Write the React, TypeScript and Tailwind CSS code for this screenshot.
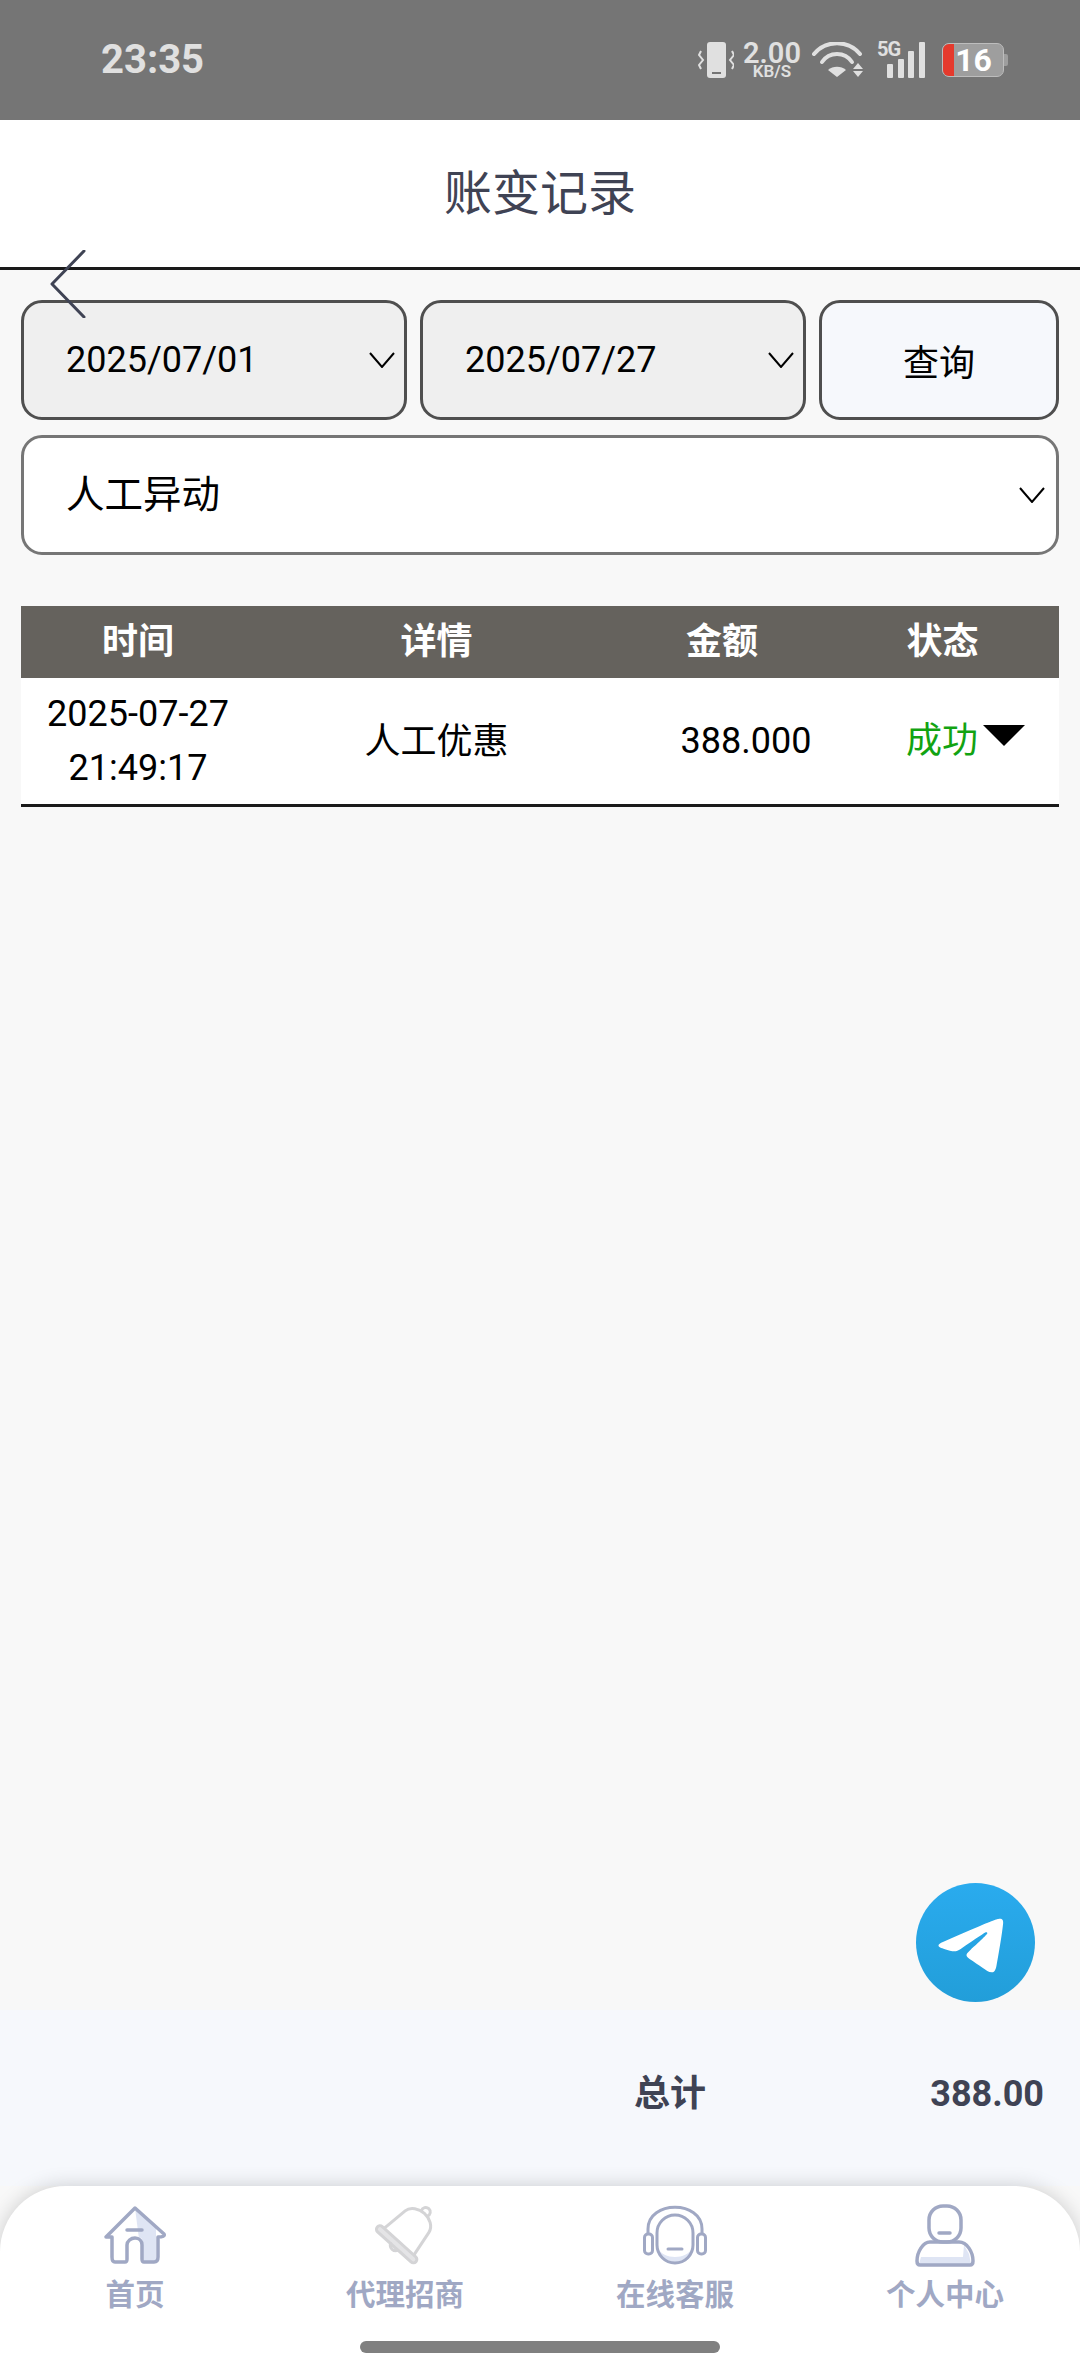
import { ReactNode } from "react";

function Chevron() {
  return (
    <svg width="26" height="16" viewBox="0 0 26 16" fill="none" stroke="#000" strokeWidth="2">
      <path d="M1 1 L13 15 L25 1" />
    </svg>
  );
}

function StatusIcons() {
  return (
    <div className="flex items-center h-[40px] text-[#e0e0e0]">
      <svg width="36" height="36" viewBox="0 0 36 36" fill="none" className="mr-[8px]">
        <rect x="9" y="0" width="19" height="36" rx="3" fill="#e0e0e0" />
        <rect x="14" y="30" width="9" height="2" fill="#757575" />
        <path d="M3 9 L1 13 L5 18 L1 23 L3 27 M34 9 L36 13 L32 18 L36 23 L34 27" stroke="#e0e0e0" strokeWidth="2" />
      </svg>
      <div className="flex flex-col items-center w-[60px] mr-[10px] font-semibold">
        <span className="text-[29px] leading-[22px]">2.00</span>
        <span className="text-[17px] leading-[15px]">KB/S</span>
      </div>
      <svg width="52" height="36" viewBox="0 0 52 36" fill="none" className="mr-[13px]">
        <path d="M2 12 A30 30 0 0 1 48 12" stroke="#e0e0e0" strokeWidth="4" strokeLinecap="round" />
        <path d="M10 20 A18 18 0 0 1 40 20" stroke="#e0e0e0" strokeWidth="4" strokeLinecap="round" />
        <path d="M16 28 L25 35 L34 28 A14 14 0 0 0 16 28 Z" fill="#e0e0e0" />
        <path d="M46 21 L51 27 H41 Z M41 29 H51 L46 35 Z" fill="#e0e0e0" />
      </svg>
      <div className="relative w-[48px] h-[36px] mr-[17px]">
        <span className="absolute left-0 top-0 text-[20px] leading-[14px] font-bold tracking-[-1px]">5G</span>
        <svg width="48" height="36" viewBox="0 0 48 36" fill="#e0e0e0">
          <rect x="10" y="22" width="6" height="14" rx="1" />
          <rect x="21" y="17" width="6" height="19" rx="1" />
          <rect x="31" y="9" width="6" height="27" rx="1" />
          <rect x="42" y="0" width="6" height="36" rx="1" />
        </svg>
      </div>
      <div className="flex items-center">
        <div className="relative w-[62px] h-[34px] rounded-[7px] bg-[#9e9e9e] border border-[#bdbdbd] flex items-center justify-center pl-[1px]">
          <div className="absolute left-0 top-0 bottom-0 w-[11px] rounded-l-[6px] bg-[#e53a2d]" />
          <span className="relative text-[32px] font-bold leading-[32px] text-white">16</span>
        </div>
        <div className="w-[4px] h-[12px] bg-[#9e9e9e] rounded-r-[2px]" />
      </div>
    </div>
  );
}

function DateField({ value }: { value: string }) {
  return (
    <div className="w-[386px] h-[120px] shrink-0 rounded-[21px] border-[3px] border-[#4f4f4f] bg-[#efefef] flex items-center justify-between pl-[42px] pr-[9px]">
      <span className="text-[36px] leading-none text-black">{value}</span>
      <Chevron />
    </div>
  );
}

function HomeIcon() {
  return (
    <svg width="64" height="60" viewBox="0 0 64 60" fill="none" stroke="#a0a8c4" strokeWidth="3.500" strokeLinejoin="round" strokeLinecap="round">
      <path d="M32 3 L53 23 V57 H39 V36 C39 30 36 34 36 34 Z" fill="#dfe5f4" stroke="none" />
      <path d="M9 32 H3 L32 3 L61 29 C62 31 60 32 55 32 V52 C55 55 54 57 51 57 H41 C39 57 39 56 39 54 V40 C39 36 36 33 32 33 C28 33 24 36 24 40 V54 C24 56 24 57 22 57 H12 C10 57 9 55 9 52 Z" />
      <path d="M24 25 H39" />
    </svg>
  );
}

function BellIcon() {
  return (
    <svg width="62" height="64" viewBox="0 0 62 64" fill="none" stroke="#d4d4d6" strokeWidth="3" strokeLinejoin="round" strokeLinecap="round">
      <g transform="rotate(42 31 32)">
        <path d="M27 3 A4.500 4.500 0 1 1 35 3" />
        <path d="M11 41 L15 14 C16 7 24 3 31 3 C38 3 46 7 47 14 L51 41" />
        <rect x="5" y="41" width="52" height="7" rx="3.500" fill="#e4e4e6" />
        <path d="M26 48 A5.500 5.500 0 0 0 36 48" />
      </g>
    </svg>
  );
}

function HeadsetIcon() {
  return (
    <svg width="64" height="60" viewBox="0 0 64 60" fill="none" stroke="#a0a8c4" strokeWidth="3">
      <path d="M15 43 C20 55 44 55 49 43 C47 58 40 58 32 58 C24 58 17 56 15 43 Z" fill="#dfe5f4" stroke="none" />
      <rect x="14" y="10" width="36" height="48" rx="18" />
      <path d="M5 29 V24 C5 -5 59 -5 59 24 V29" />
      <rect x="1.500" y="29" width="8" height="20" rx="3.500" />
      <rect x="54.500" y="29" width="8" height="20" rx="3.500" />
      <path d="M25 44 H39" strokeLinecap="round" />
    </svg>
  );
}

function PersonIcon() {
  return (
    <svg width="60" height="63" viewBox="0 0 60 63" fill="none" stroke="#a0a8c4" strokeWidth="3.500" strokeLinecap="round" strokeLinejoin="round">
      <path d="M6 53 H48 L49 41 L54 50 L56 60 H4 Z" fill="#dfe5f4" stroke="none" />
      <rect x="14" y="2" width="32" height="36" rx="14" fill="#fff" />
      <path d="M15 38 H44 C52 38 58 48 58 57 C58 60 57 61 55 61 H5 C3 61 2 60 2 57 C2 48 8 38 15 38 Z" />
      <path d="M24 29 H35" />
    </svg>
  );
}

function NavItem({ icon, label }: { icon: ReactNode; label: string }) {
  return (
    <div className="flex flex-col items-center">
      <div className="h-[64px] flex items-center justify-center">{icon}</div>
      <span className="mt-[10px] text-[29.500px] leading-[36px] font-bold text-[#a0a8c4]">{label}</span>
    </div>
  );
}

export default function App() {
  return (
    <div className="relative flex flex-col h-[2374px] w-full overflow-hidden bg-[#f8f8f8] font-['Roboto','Noto_Sans_CJK_SC',sans-serif]">
      <div className="h-[120px] shrink-0 bg-[#757575] flex items-center justify-between pl-[101px] pr-[72px]">
        <span className="text-[40px] font-bold text-[#e0e0e0] leading-none">23:35</span>
        <StatusIcons />
      </div>

      <header className="h-[150px] shrink-0 bg-white border-b-[3px] border-[#1a1a1a] flex items-center justify-center">
        <h1 className="text-[48px] leading-none font-normal text-[#3f4354]">账变记录</h1>
      </header>

      {/* back arrow hangs over the header line */}
      <svg width="36" height="68" viewBox="0 0 36 68" fill="none" stroke="#3f4354" strokeWidth="3" strokeLinecap="round" strokeLinejoin="round" className="absolute left-[50px] top-[250px]">
        <path d="M34 1 L2 34 L34 67" />
      </svg>

      <main className="flex-1 px-[21px] pt-[30px]">
        <div className="flex gap-[13px]">
          <DateField value="2025/07/01" />
          <DateField value="2025/07/27" />
          <button className="flex-1 h-[120px] rounded-[21px] border-[3px] border-[#4f4f4f] bg-[#f6f8fc] text-[36px] text-black pt-[7px]">查询</button>
        </div>
        <div className="mt-[15px] h-[120px] rounded-[21px] border-[3px] border-[#767676] bg-white flex items-center justify-between pl-[42px] pr-[11px]">
          <span className="text-[38.500px] leading-none text-black">人工异动</span>
          <Chevron />
        </div>

        <div className="mt-[51px] text-[36px] text-black">
          <div className="grid grid-cols-[234px_363px_208px_1fr] h-[72px] items-center bg-[#65625d] text-white font-bold text-center">
            <span>时间</span>
            <span>详情</span>
            <span>金额</span>
            <span>状态</span>
          </div>
          <div className="grid grid-cols-[234px_363px_208px_1fr] h-[129px] items-center bg-white border-b-[3px] border-[#1a1a1a] text-center">
            <span className="leading-[54px]">
              2025-07-27
              <br />
              21:49:17
            </span>
            <span className="pt-[2px]">人工优惠</span>
            <span className="pl-[48px]">388.000</span>
            <div className="flex items-center pl-[80px]">
              <span className="text-[#12a312]">成功</span>
              <svg width="42" height="21" viewBox="0 0 42 21" fill="#000" className="ml-[5px] mb-[12px]">
                <path d="M0 0 H42 L21 21 Z" />
              </svg>
            </div>
          </div>
        </div>
      </main>

      <a className="absolute left-[916px] top-[1883px]">
        <svg width="119" height="119" viewBox="0 0 240 240">
          <defs>
            <linearGradient id="tg" x1="0" y1="0" x2="0" y2="1">
              <stop offset="0" stopColor="#2AABEE" />
              <stop offset="1" stopColor="#229ED9" />
            </linearGradient>
          </defs>
          <circle cx="120" cy="120" r="120" fill="url(#tg)" />
          <path fill="#fff" d="M54.300 118.800c35-15.200 58.300-25.300 70-30.200 33.300-13.900 40.300-16.300 44.800-16.400 1 0 3.200.2 4.700 1.400 1.200 1 1.500 2.300 1.700 3.300s.4 3.100.2 4.700c-1.800 19-9.600 65.100-13.600 86.300-1.700 9-5 12-8.200 12.300-7 .6-12.300-4.600-19-9-10.600-6.900-16.500-11.200-26.800-18-11.900-7.800-4.200-12.100 2.600-19.100 1.800-1.800 32.500-29.800 33.100-32.300.1-.3.1-1.500-.6-2.100-.7-.6-1.700-.4-2.500-.2-1.100.2-17.900 11.400-50.600 33.500-4.800 3.300-9.100 4.900-13 4.800-4.300-.1-12.500-2.400-18.700-4.400-7.500-2.400-13.500-3.700-13-7.900.3-2.200 3.300-4.400 8.900-6.700z" />
        </svg>
      </a>

      <div className="h-[176px] shrink-0 bg-[#f6f8fc] flex items-center pb-[8px] text-[36px] font-bold text-[#3f4354]">
        <span className="ml-[634px]">总计</span>
        <span className="ml-auto mr-[36px]">388.00</span>
      </div>

      <nav className="relative h-[188px] shrink-0 bg-white rounded-t-[66px] shadow-[0_0_20px_rgba(0,0,0,0.18)] grid grid-cols-4 pt-[17px]">
        <NavItem icon={<HomeIcon />} label="首页" />
        <NavItem icon={<BellIcon />} label="代理招商" />
        <NavItem icon={<HeadsetIcon />} label="在线客服" />
        <NavItem icon={<PersonIcon />} label="个人中心" />
        <div className="absolute left-[360px] bottom-[21px] w-[360px] h-[12px] rounded-full bg-[#808080]" />
      </nav>
    </div>
  );
}
